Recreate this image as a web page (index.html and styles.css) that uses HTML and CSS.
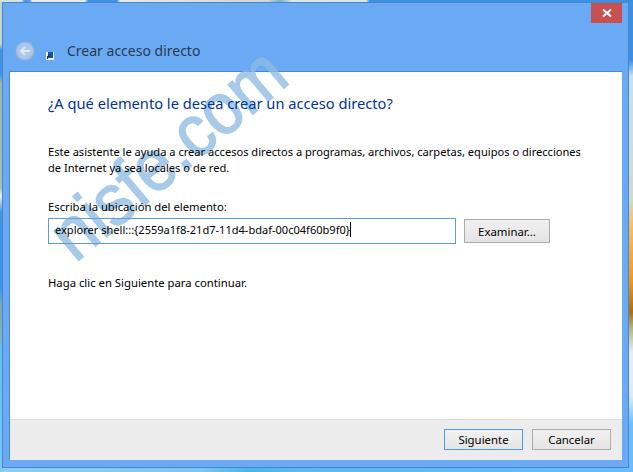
FILE: index.html
```html
<!DOCTYPE html>
<html>
<head>
    <meta charset="UTF-8" />
    <title>Crear acceso directo</title>
    <link rel="stylesheet" href="styles.css">
</head>
<body>
    <div class="window">
        <div class="titlebar">
            <div class="close-btn">
                <svg width="10" height="10" viewBox="0 0 10 10"><path d="M1 1.5 L9 8.5 M9 1.5 L1 8.5" stroke="#fff" stroke-width="2" fill="none"/></svg>
            </div>
            <div class="nav-row">
                <svg class="back-icon" width="20" height="20" viewBox="0 0 20 20">
                    <circle cx="10" cy="10" r="8.8" fill="#a9c8ee" stroke="#a3b5d0" stroke-width="1.4"/>
                    <path d="M15 10 H6 M10 6 L6 10 L10 14" stroke="#dfe7f2" stroke-width="2" fill="none"/>
                </svg>
                <svg class="shortcut-icon" width="8" height="8" viewBox="0 0 8 8">
                    <rect width="8" height="8" fill="#eef2f8"/>
                    <rect x="2" y="0" width="5" height="6" fill="#1d4f9c"/>
                    <path d="M1.5 7 V4.5 H4 M3 3 L1.5 4.5" stroke="#10306a" stroke-width="1" fill="none"/>
                </svg>
                <span class="window-title">Crear acceso directo</span>
            </div>
        </div>
        <div class="content">
            <div class="main">
                <h1 class="heading">¿A qué elemento le desea crear un acceso directo?</h1>
                <p class="intro">Este asistente le ayuda a crear accesos directos a programas, archivos, carpetas, equipos o direcciones<br>de Internet ya sea locales o de red.</p>
                <label class="field-label">Escriba la ubicación del elemento:</label>
                <div class="field-row">
                    <div class="text-input"><span>explorer shell:::{2559a1f8-21d7-11d4-bdaf-00c04f60b9f0}</span><i class="caret"></i></div>
                    <div class="btn browse-btn">Examinar...</div>
                </div>
                <p class="hint">Haga clic en Siguiente para continuar.</p>
            </div>
            <div class="footer">
                <div class="btn btn-default">Siguiente</div>
                <div class="btn">Cancelar</div>
            </div>
        </div>
    </div>
    <div class="watermark">nisfe.com</div>
</body>
</html>
```

FILE: styles.css
```css
html, body {
    margin: 0;
    padding: 0;
}
body {
    width: 633px;
    height: 472px;
    overflow: hidden;
    position: relative;
    background-color: #7cc4f4;
    /* bits of the desktop wallpaper around the window: top, left, right, bottom */
    background-image:
        linear-gradient(90deg, #d5e3e0 0, #d5e3e0 22px, #4a9ae6 24px, #4a9ae6 30px, #e6ecea 32px, #e6ecea 85px, #3f92e4 88px, #3f92e4 117px, #e8ebe8 120px, #cfd6d6 268px, #6fb4cc 280px, #dce8e6 292px, #d8e6e6 366px, #3a90e4 370px),
        linear-gradient(180deg, #c5d6d2 0, #c5d6d2 44px, #3f92e4 50px, #3f92e4 74px, #9ab8b4 84px, #a8bebc 188px, #eef0ee 196px, #3f96e6 212px, #3f96e6 290px, #7fa8b0 304px, #7fb0b8 330px, #66c0ee 352px, #7cc8f4 472px),
        linear-gradient(180deg, #3a90e4 0, #3a90e4 60px, #c8e0ec 76px, #d4d8cc 200px, #f4c060 226px, #f09a18 280px, #a87010 312px, #b8b890 330px, #e8ecec 352px, #dfeaf2 396px, #6cc0f8 424px, #66bcfa 472px),
        linear-gradient(90deg, #8ccdf4 0, #7cc6f4 200px, #4cb4e4 250px, #5cb8ee 300px, #66bcfa 633px);
    background-repeat: no-repeat;
    background-size: 633px 2px, 2px 472px, 4px 472px, 633px 4px;
    background-position: 0 0, 0 0, 629px 0, 0 468px;
    font-family: "Noto Sans", sans-serif;
    color: #000;
}
.window {
    box-sizing: border-box;
    width: 627px;
    height: 466px;
    margin: 2px 0 0 2px;
    background: #6aaaf5;
    border: 1px solid #4a86c8;
    padding: 0 6px 7px 6px;
    display: flex;
    flex-direction: column;
}
.titlebar {
    height: 68px;
    flex: none;
    display: flex;
    flex-direction: column;
}
.close-btn {
    align-self: flex-end;
    width: 31px;
    height: 20px;
    background: #c75050;
    display: flex;
    align-items: center;
    justify-content: center;
}
.nav-row {
    display: flex;
    align-items: center;
    margin-top: 18px;
    margin-left: 6px;
}
.back-icon {
    flex: none;
}
.shortcut-icon {
    flex: none;
    margin: 9px 0 0 11px;
}
.window-title {
    margin: -2px 0 0 13px;
    font-size: 14px;
    color: #2b3a4f;
}
.content {
    flex: 1;
    display: flex;
    flex-direction: column;
    background: #fff;
    border-top: 1px solid #4a86c8;
    border-left: 1px solid #4a86c8;
}
.main {
    flex: 1;
    padding: 0 0 0 38px;
}
/* text stays above the watermark */
.main > * {
    position: relative;
    z-index: 2;
}
.heading {
    margin: 20px 0 0 0;
    font-size: 14.65px;
    font-weight: normal;
    line-height: 22px;
    color: #003399;
}
.intro {
    margin: 30px 0 0 0;
    font-size: 11.1px;
    line-height: 16px;
}
.field-label {
    display: block;
    margin-top: 23px;
    font-size: 11.25px;
    line-height: 16px;
}
.field-row {
    display: flex;
    align-items: center;
    margin-top: 3px;
}
.text-input {
    box-sizing: border-box;
    width: 408px;
    height: 26px;
    border: 1px solid #5b9ee0;
    padding: 0 0 3px 6px;
    font-size: 11.05px;
    line-height: 20px;
    display: flex;
    align-items: center;
}
.caret {
    width: 1px;
    height: 15px;
    background: #000;
}
.btn {
    box-sizing: border-box;
    width: 79px;
    height: 21px;
    border: 1px solid #acacac;
    background: linear-gradient(#f0f0f0, #e5e5e5);
    font-size: 11.4px;
    display: flex;
    align-items: center;
    justify-content: center;
}
.browse-btn {
    width: 86px;
    height: 24px;
    margin-left: 8px;
}
.btn-default {
    border: 1px solid #4c9be8;
}
.hint {
    margin: 31px 0 0 0;
    font-size: 11.3px;
    line-height: 16px;
}
.footer {
    flex: none;
    box-sizing: border-box;
    height: 41px;
    background: #ececec;
    border-top: 1px solid #dfdfdf;
    display: flex;
    justify-content: flex-end;
    gap: 9px;
    padding: 9px 11px 0 0;
}
.watermark {
    position: absolute;
    z-index: 1;
    left: 26px;
    top: 117px;
    font-family: "Liberation Sans", sans-serif;
    font-size: 66px;
    line-height: 72px;
    color: #8fbce2;
    -webkit-text-stroke: 1.5px #8fbce2;
    opacity: 0.78;
    transform: rotate(-40deg) scaleY(1.1);
    white-space: nowrap;
}
```
